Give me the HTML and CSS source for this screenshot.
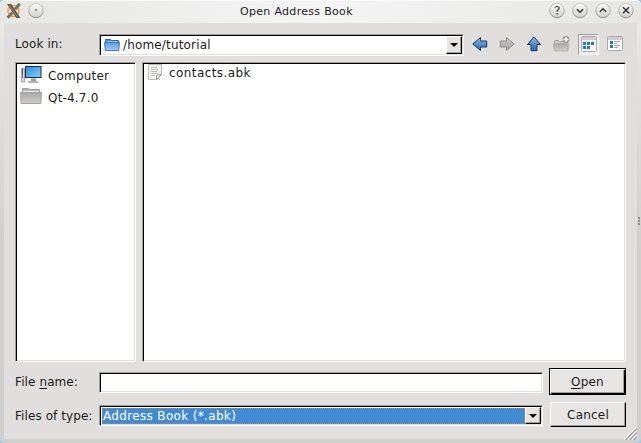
FILE: index.html
```html
<!DOCTYPE html>
<html lang="en">
<head>
<meta charset="utf-8">
<title>Open Address Book</title>
<link rel="stylesheet" href="styles.css">
</head>
<body>
<svg width="0" height="0" class="defs">
  <defs>
    <linearGradient id="blue" x1="0" y1="0" x2="0" y2="1"><stop offset="0" stop-color="#8fb9e8"/><stop offset="1" stop-color="#2d67ae"/></linearGradient>
    <linearGradient id="gray" x1="0" y1="0" x2="0" y2="1"><stop offset="0" stop-color="#c9c9c8"/><stop offset="1" stop-color="#a5a5a4"/></linearGradient>
    <linearGradient id="folder" x1="0" y1="0" x2="0" y2="1"><stop offset="0" stop-color="#5f9be6"/><stop offset="1" stop-color="#a5cdfb"/></linearGradient>
    <linearGradient id="grayfolder" x1="0" y1="0" x2="0" y2="1"><stop offset="0" stop-color="#aaa9a8"/><stop offset="1" stop-color="#cecdcc"/></linearGradient>
    <linearGradient id="screen" x1="0" y1="0" x2="1" y2="1"><stop offset="0" stop-color="#218bdd"/><stop offset="1" stop-color="#8bd2fc"/></linearGradient>
    <linearGradient id="knob" x1="0" y1="0" x2="0" y2="1"><stop offset="0" stop-color="#f9f9f9"/><stop offset="1" stop-color="#d2d1d0"/></linearGradient>
    <linearGradient id="rim" x1="0" y1="0" x2="0" y2="1"><stop offset="0" stop-color="#c9c8c7"/><stop offset="1" stop-color="#8b8a89"/></linearGradient>
  </defs>
</svg>
<div class="window">
  <header class="titlebar">
    <svg class="app" width="16" height="16" viewBox="0 0 16 16"><circle cx="7.5" cy="8" r="5.5" fill="#fce7b6" stroke="#f5a33a" stroke-width="1.6"/><path d="M1 1h4.3l9.2 14h-4.200z" fill="#565b59"/><path d="M13.800.8 9 6.300M6.500 9.500 1.600 14.800" stroke="#6e7270" stroke-width="3"/><path d="M2.800 1.600 11.700 14" stroke="#8a8c88"/></svg>
    <svg class="pin" width="16" height="17" viewBox="0 0 16 17"><circle cx="8" cy="8.5" r="7.2" fill="url(#knob)" stroke="url(#rim)"/><circle cx="8" cy="8" r="1.1" fill="#777"/></svg>
    <h1 class="title">Open Address Book</h1>
    <div class="controls">
      <svg width="16" height="17" viewBox="0 0 16 17"><circle cx="8" cy="8.5" r="7.2" fill="url(#knob)" stroke="url(#rim)"/><path d="M6 5.600c.5-1.600 4.200-1.500 4.200.5C10.200 7.600 8.100 7.600 8.100 9.700M8.100 11v1.400" class="glyph thin"/></svg>
      <svg width="16" height="17" viewBox="0 0 16 17"><circle cx="8" cy="8.5" r="7.2" fill="url(#knob)" stroke="url(#rim)"/><path d="M4.900 7.300 8 10.300l3.100-3" class="glyph"/></svg>
      <svg width="16" height="17" viewBox="0 0 16 17"><circle cx="8" cy="8.5" r="7.2" fill="url(#knob)" stroke="url(#rim)"/><path d="M4.900 9.800 8 6.800l3.100 3" class="glyph"/></svg>
      <svg width="16" height="17" viewBox="0 0 16 17"><circle cx="8" cy="8.5" r="7.2" fill="url(#knob)" stroke="url(#rim)"/><path d="m5 5.300 6 6m0-6-6 6" class="glyph"/></svg>
    </div>
  </header>
  <main class="dialog">
    <div class="toolbar">
      <span class="label"><span class="t-look">Look in:</span></span>
      <div class="field combo">
        <svg class="dir" width="16" height="14" viewBox="0 0 16 14"><path d="M1.500 12V1.500h5l1 1h7V12z" fill="#4d88d3" stroke="#2b65ae"/><path d="M2.500 3.500h11v2h-11z" fill="#e9f2fc"/><path d="M.5 4.500h15l-.8 8H1.300z" fill="url(#folder)" stroke="#3d78c4"/></svg>
        <span class="t-path">/home/tutorial</span>
        <span class="drop"></span>
      </div>
      <div class="tools">
        <svg class="back" width="16" height="16" viewBox="0 0 16 16"><path d="M.8 8 8.500 1.500V5h6.200v6H8.500v3.500z" fill="url(#blue)" stroke="#17375f"/></svg>
        <svg class="fwd" width="16" height="16" viewBox="0 0 16 16"><path d="M15.200 8 7.500 1.500V5H1.300v6h6.200v3.500z" fill="url(#gray)" stroke="#8c8b8a"/></svg>
        <svg class="up" width="16" height="16" viewBox="0 0 16 16"><path d="M8 .8 14.500 8.500H11v6.200H5V8.500H1.500z" fill="url(#blue)" stroke="#17375f"/></svg>
        <svg class="new" width="17" height="16" viewBox="0 0 17 16"><path d="M1.500 14V4.500h4l1 1h8V14z" fill="#c9c8c7" stroke="#a9a8a7"/><path d="M.5 7.500h15l-.7 7.500H1.200z" fill="url(#grayfolder)" stroke="#b4b3b2"/><circle cx="13" cy="3.500" r="3.400" fill="#989796"/><path d="M13 1v5M10.500 3.500h5" stroke="#fff" stroke-width="1.400"/></svg>
        <span class="toggle"><svg width="16" height="16" viewBox="0 0 16 16"><rect x=".5" y=".5" width="15" height="15" rx="1" fill="#fff" stroke="#aaa9a8"/><path d="M1 1h14v3H1z" fill="#cfcecd"/><path d="M2 6h3v3H2zM6 6h3v3H6zM10 6h3v3h-3zM2 10h3v3H2zM6 10h3v3H6z" fill="#2372d5"/></svg></span>
        <svg class="detail" width="16" height="16" viewBox="0 0 16 16"><rect x=".5" y=".5" width="15" height="14" rx="1" fill="#fff" stroke="#aaa9a8"/><path d="M1 1h14v3H1z" fill="#cfcecd"/><path d="M3 5h3v3H3zM3 9h3v3H3z" fill="#2372d5"/><path d="M7 5.500h6M7 7.500h3M7 9.500h6M7 11.500h4" stroke="#aaa9a8"/></svg>
      </div>
    </div>
    <div class="panes">
      <ul class="field places">
        <li><svg width="22" height="20" viewBox="0 0 22 20"><path d="M1.500 3.500h3V17h-3z" fill="#d3d7db" stroke="#a0a5aa"/><path d="M2.500 4v9" stroke="#53585d"/><path d="M2.500 9v3" stroke="#d25a55"/><rect x="5.500" y="1.500" width="15.500" height="11" fill="url(#screen)" stroke="#252a30"/><path d="M11 13.500h5v3h-5z" fill="#959ba1"/><path d="M8 17h10" stroke="#b1b5b9" stroke-width="2"/></svg><span class="t-comp">Computer</span></li>
        <li><svg width="22" height="20" viewBox="0 0 22 20"><path d="M2.500 16V1.500h6l1 1h10V16z" fill="#b9b8b7" stroke="#a09f9e"/><path d="M3 4h16v2H3z" fill="#e9e9e9"/><path d="M.5 5.500h21l-.6 11H1.100z" fill="url(#grayfolder)" stroke="#a3a2a1"/></svg><span class="t-qt">Qt-4.7.0</span></li>
      </ul>
      <ul class="field files">
        <li><svg width="16" height="16" viewBox="0 0 16 16"><path d="M1.500.5h13v10l-5 5h-8z" fill="#f1f1f0" stroke="#bcbbba"/><path d="M4 3.500h6M4 5.500h7M4 7.500h6M4 9.500h7M4 11.500h4" stroke="#c0bfbe"/><path d="M14.500 10.500 9.500 15.500v-4z" fill="#fff" stroke="#959493"/></svg><span class="t-file">contacts.abk</span></li>
      </ul>
    </div>
    <div class="form">
      <span class="label"><span class="t-name">File <i>n</i>ame:</span></span>
      <div class="field input"></div>
      <button class="default"><span class="t-open"><i>O</i>pen</span></button>
    </div>
    <div class="form second">
      <span class="label"><span class="t-type">Files of type:</span></span>
      <div class="field combo"><div class="selected"><span class="t-sel">Address Book (*.abk)</span></div><span class="drop"></span></div>
      <button><span class="t-cancel">Cancel</span></button>
    </div>
  </main>
  <svg class="grip" width="13" height="13" viewBox="0 0 13 13"><path d="M0 13 13 0M4 13l9-9M8 13l5-5" stroke="#fff" stroke-width="1.200"/><path d="M1.500 13 13 1.500M5.500 13 13 5.500M9.500 13 13 9.500" stroke="#999897" stroke-width="1.200"/></svg>
  <span class="handle"></span>
</div>
</body>
</html>
```
FILE: styles.css
```css
* { box-sizing: border-box; }
body { margin: 0; background: #8fcdf3; overflow: hidden; font: 12px/16px "DejaVu Sans", sans-serif; color: #1c1b1a; }
.defs { position: absolute; }
.window { position: relative; width: 641px; height: 443px; padding: 0 4px 4px; border-radius: 5px; background: linear-gradient(#f0f0f0, #e4e4e3 50px, #d0d0cf 250px, #cfcfce); display: flex; flex-direction: column; }
.titlebar { height: 23px; flex: none; display: flex; align-items: flex-start; margin: 0 -4px; padding: 2px 7px 0 6px; border-top: 1px solid #fafafa; border-radius: 5px 5px 0 0; background: linear-gradient(90deg, #e6e6e5, #f5f5f5 50%, #e6e6e5); }
.pin { margin-left: 6px; margin-top: -1px; }
.title { margin: 0; flex: 1; padding-left: 196px; font-size: 11px; font-weight: 400; line-height: 17px; letter-spacing: .31px; white-space: nowrap; }
.controls { display: flex; gap: 7px; margin-top: -1px; }
.glyph { fill: none; stroke: #343332; stroke-width: 1.5; }
.thin { stroke-width: 1.2; }
.dialog { height: 416px; background: #e0dfde; padding: 11px 11px 0; }
svg { display: block; flex: none; }
span { white-space: nowrap; }
i { font-style: normal; text-decoration: underline; text-underline-offset: 2px; text-decoration-thickness: 1px; text-decoration-skip-ink: none; }
.toolbar { display: flex; height: 22px; }
.label { width: 84px; padding-top: 2px; flex: none; }
.field { background: #fff; border: 1px solid; border-color: #a09f9e #fff #fff #a09f9e; box-shadow: inset 1px 1px #000, inset -1px -1px #e0dfde; }
.combo { display: flex; padding: 1px; }
.toolbar .combo { width: 365px; padding-left: 4px; }
.dir { margin-top: 2px; }
.t-path { margin-left: 3px; padding-top: 1px; flex: 1; letter-spacing: .16px; }
.t-look { letter-spacing: .1px; }
.drop { width: 16px; height: 18px; flex: none; background: #e6e5e4; border: 1px solid; border-color: #fff #000 #000 #fff; box-shadow: inset -1px -1px #a09f9e; display: flex; justify-content: center; align-items: center; }
.drop::before { content: ""; border: 4px solid transparent; border-top-color: #000; border-bottom: 0; }
.tools { display: flex; padding-top: 2px; }
.back { margin-left: 8px; }
.fwd { margin-left: 11px; }
.up { margin-left: 11px; }
.new { margin-left: 11px; }
.toggle { width: 21px; height: 21px; margin: -2px 0 0 8px; padding: 1px 2px; background: #eeedec; border: 1px solid; border-color: #a09f9e #fff #fff #a09f9e; }
.detail { margin-left: 8px; }
.panes { display: flex; gap: 6px; margin-top: 6px; height: 300px; }
ul { list-style: none; margin: 0; padding: 0; }
li { display: flex; }
.places { width: 121px; padding: 1px 0 0 4px; }
.places li { height: 22px; padding-top: 1px; }
.places li span { margin-left: 6px; padding-top: 3px; letter-spacing: .18px; }
.files { width: 484px; padding: 1px 0 0 4px; }
.files li span { margin-left: 6px; padding-top: 1px; letter-spacing: .42px; }
.form { display: flex; align-items: center; height: 27px; margin-top: 6px; }
.form .label { padding: 0; }
.t-type { letter-spacing: .08px; }
.t-name { letter-spacing: .1px; }
.form .field { width: 444px; height: 21px; margin-top: 2px; }
.form .drop { height: 17px; }
.form .combo { padding: 1px 1px 1px 2px; }
.selected { flex: 1; background: #418bd4; color: #fff; border: 1px dotted #a98a70; margin-top: 1px; height: 16px; line-height: 14px; letter-spacing: .34px; }
.second { height: 25px; margin-top: 7px; }
.second .label { padding-top: 2px; }
button { width: 76px; height: 25px; margin-left: 7px; padding: 0; font: inherit; color: inherit; letter-spacing: .2px; background: #e7e6e5; border: 1px solid; border-color: #fff #000 #000 #fff; box-shadow: inset -1px -1px #a09f9e; }
.default { width: 77px; height: 27px; margin-left: 6px; border: 1px solid #000; box-shadow: inset 1px 1px #fff, inset -1px -1px #000, inset -2px -2px #a09f9e; }
.grip { position: absolute; right: 4px; bottom: 3px; }
.handle { position: absolute; right: 1px; top: 217px; width: 2px; height: 9px; background: repeating-linear-gradient(#8e8d8c 0 2px, transparent 2px 3px); }
```
